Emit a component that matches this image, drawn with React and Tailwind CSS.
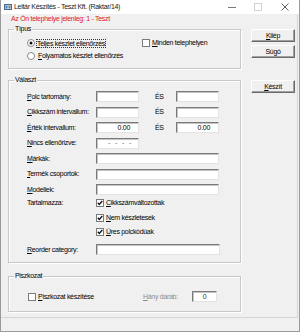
import React from "react";

const Acc = ({ t }) => (
  <>
    <span className="underline underline-offset-[1px]">{t[0]}</span>
    {t.slice(1)}
  </>
);

function Radio({ on }) {
  return (
    <svg width="8" height="8" viewBox="0 0 8 8" className="shrink-0">
      <circle cx="4" cy="4" r="3.5" fill="#fff" stroke="#8a8a8a" />
      {on && <circle cx="4" cy="4" r="1.5" fill="#111" />}
    </svg>
  );
}

function Check({ on }) {
  return (
    <svg width="8" height="8" viewBox="0 0 8 8" className="shrink-0">
      <rect x="0.5" y="0.5" width="7" height="7" fill="#fff" stroke="#7a7a7a" />
      {on && (
        <path d="M1.8 3.8 L3.3 5.5 L6.3 2" fill="none" stroke="#111" strokeWidth="1.3" />
      )}
    </svg>
  );
}

function Field({ w, children, className = "" }) {
  return (
    <div
      className={`h-[11px] bg-white border border-t-[#7a7a7a] border-l-[#7a7a7a] border-r-[#e3e3e3] border-b-[#e3e3e3] shadow-[inset_1px_1px_0_#c4c4c4] flex items-center ${w} ${className}`}
    >
      {children}
    </div>
  );
}

function Btn({ children, className = "" }) {
  return (
    <div
      className={`w-[44px] h-[13px] flex items-center justify-center bg-[#f0f0f0] border border-t-white border-l-white border-r-[#6a6a6a] border-b-[#6a6a6a] shadow-[inset_-1px_-1px_0_#a0a0a0] ${className}`}
    >
      {children}
    </div>
  );
}

function Group({ title, className = "", children }) {
  return (
    <fieldset
      className={`border border-[#c8c8c8] shadow-[inset_1px_1px_0_#fff,1px_1px_0_#fff] ${className}`}
    >
      <legend className="ml-[5px] px-[1px] leading-[8px]">{title}</legend>
      {children}
    </fieldset>
  );
}

function Row({ label, children }) {
  return (
    <div className="h-[11px] flex items-center pl-[18px]">
      <div className="w-[69px] shrink-0">
        <Acc t={label} />
      </div>
      {children}
    </div>
  );
}

function Pair({ label, a, b }) {
  return (
    <Row label={label}>
      <Field w="w-[43px]" className="justify-end pr-[8px]">{a}</Field>
      <div className="w-[37px] pl-[16px]">ÉS</div>
      <Field w="w-[43px]" className="justify-end pr-[8px]">{b}</Field>
    </Row>
  );
}

export default function App() {
  return (
    <div className="w-[300px] h-[332px] flex flex-col bg-[#f0f0f0] border-x border-b border-[#9a9a9a] font-['Liberation_Sans',Arial,sans-serif] text-[7px] tracking-[-0.3px] leading-[8px] text-black overflow-hidden">
      {/* title bar */}
      <div className="h-[14px] bg-white flex items-center shrink-0">
        <svg width="8" height="8" viewBox="0 0 8 8" className="ml-[3px] shrink-0">
          <rect x="0.5" y="1.5" width="7" height="5" fill="#dfe8f2" stroke="#4a6a8a" />
          <rect x="1.5" y="2.5" width="2" height="3" fill="#3d7cc9" />
          <rect x="4.5" y="2.5" width="2" height="3" fill="#7a7a7a" />
        </svg>
        <span className="ml-[2px] text-[#222]">Leltár Készítés - Teszt Kft. (Raktar/14)</span>
        <div className="ml-auto flex h-full">
          <div className="w-[26px] flex items-center justify-center">
            <svg width="8" height="8" viewBox="0 0 8 8">
              <path d="M0 4.5 H8" stroke="#555" strokeWidth="0.8" />
            </svg>
          </div>
          <div className="w-[26px] flex items-center justify-center">
            <svg width="8" height="8" viewBox="0 0 8 8">
              <rect x="0.5" y="0.5" width="7" height="7" fill="none" stroke="#c8c8c8" strokeWidth="0.8" />
            </svg>
          </div>
          <div className="w-[28px] flex items-center justify-center">
            <svg width="8" height="8" viewBox="0 0 8 8">
              <path d="M0.5 0.5 L7.5 7.5 M7.5 0.5 L0.5 7.5" stroke="#333" strokeWidth="0.8" />
            </svg>
          </div>
        </div>
      </div>

      {/* client area */}
      <div className="h-[304px] w-[297px] shrink-0 flex border-r border-b border-[#d6d6d6]">
        <div className="w-[233px] ml-[7px] flex flex-col shrink-0">
          <div className="h-[9px] leading-[9px] pl-[3px] text-[#e0201c]">
            Az Ön telephelye jelenleg: 1 - Teszt
          </div>

          <Group title="Típus" className="mt-[2px] pt-[5px] pb-[7px]">
            <div className="flex flex-col gap-[3px]">
              <div className="h-[10px] flex items-center">
                <div className="w-[133px] flex items-center pl-[18px]">
                  <Radio on />
                  <span className="ml-[1px] px-[1px] outline outline-1 outline-dotted outline-[#333] -outline-offset-1 leading-[9px]">
                    <Acc t="Teljes készlet ellenőrzés" />
                  </span>
                </div>
                <Check />
                <span className="ml-[2px]">
                  <Acc t="Minden telephelyen" />
                </span>
              </div>
              <div className="h-[10px] flex items-center pl-[18px]">
                <Radio />
                <span className="ml-[3px]">
                  <Acc t="Folyamatos készlet ellenőrzés" />
                </span>
              </div>
            </div>
          </Group>

          <Group title="Választ" className="mt-[7px] pt-[7px] pb-[7px]">
            <div className="flex flex-col gap-[4.5px]">
              <Pair label="Polc tartomány:" />
              <Pair label="Cikkszám intervallum:" />
              <Pair label="Érték intervallum:" a="0.00" b="0.00" />
              <Row label="Nincs ellenőrizve:">
                <Field w="w-[43px]" className="justify-end pr-[7px] gap-[5px] text-[#666]">
                  <span>-</span>
                  <span>-</span>
                  <span>-</span>
                  <span>-</span>
                </Field>
              </Row>
              <Row label="Márkák:">
                <Field w="w-[123px]" />
              </Row>
              <Row label="Termék csoportok:">
                <Field w="w-[123px]" />
              </Row>
              <Row label="Modellek:">
                <Field w="w-[123px]" />
              </Row>
            </div>

            <div className="mt-[3px] flex pl-[18px]">
              <div className="w-[69px] shrink-0 h-[10px] flex items-center">Tartalmazza:</div>
              <div className="flex flex-col gap-[4.5px]">
                {["Cikkszámváltozottak", "Nem készletesek", "Üres polckódúak"].map((t) => (
                  <div key={t} className="h-[10px] flex items-center">
                    <Check on />
                    <span className="ml-[2px]">
                      <Acc t={t} />
                    </span>
                  </div>
                ))}
              </div>
            </div>

            <div className="mt-[7px]">
              <Row label="Reorder category:">
                <Field w="w-[124px]" />
              </Row>
            </div>
          </Group>

          <Group title="Piszkozat" className="mt-[9px] pt-[11px] pb-[9px]">
            <div className="h-[11px] flex items-center pl-[19px]">
              <div className="w-[115px] flex items-center shrink-0">
                <Check />
                <span className="ml-[2px]">
                  <Acc t="Piszkozat készítése" />
                </span>
              </div>
              <div className="w-[49px] shrink-0 text-[#8d8d8d]">
                <Acc t="Hány darab:" />
              </div>
              <Field w="w-[25px]" className="justify-center text-[#333]">0</Field>
            </div>
          </Group>
        </div>

        <div className="ml-[10px] flex flex-col">
          <Btn className="mt-[15px]">
            <Acc t="Kilép" />
          </Btn>
          <Btn className="mt-[3px]">Súgó</Btn>
          <Btn className="mt-[22px]">
            <Acc t="Készít" />
          </Btn>
        </div>
      </div>
      <div className="flex-1" />
    </div>
  );
}
